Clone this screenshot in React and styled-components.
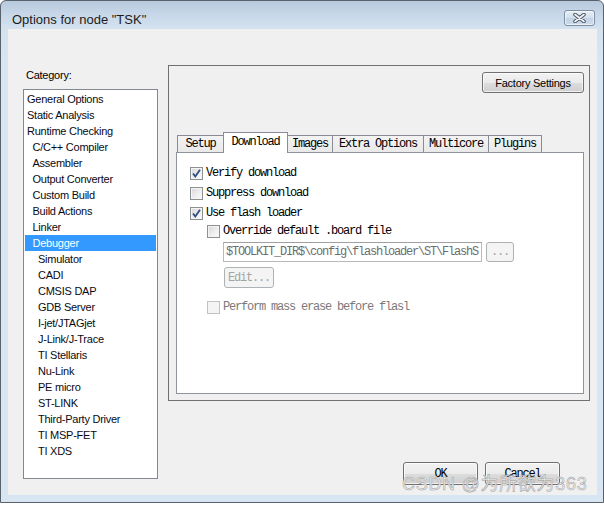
import React from 'react';
import styled, {createGlobalStyle, css} from 'styled-components';

const GlobalStyle = createGlobalStyle`
    html, body {
        margin: 0;
        padding: 0;
        background: #ffffff;
    }
    * {
        box-sizing: border-box;
    }
`

const uiFont = css`
    font-family: "Liberation Sans", Arial, sans-serif;
    font-size: 11px;
    letter-spacing: -0.25px;
`

const monoFont = css`
    font-family: "Liberation Mono", "Courier New", monospace;
    font-size: 12px;
    letter-spacing: -1.2px;
`

const Window = styled.div`
    position: relative;
    width: 604px;
    height: 503px;
    border: 1px solid #59616b;
    border-radius: 6px 6px 0 0;
    background: linear-gradient(180deg, #b7c9dd 0px, #c8d8e9 14px, #d4e2f0 28px, #d8e5f3 60px, #d8e5f3 100%);
    display: flex;
    flex-direction: column;
`

const TitleBar = styled.div`
    height: 28px;
    display: flex;
    justify-content: space-between;
    align-items: flex-start;
    padding: 0 8px 0 11px;
`

const Title = styled.div`
    font-family: "Liberation Sans", Arial, sans-serif;
    font-size: 13px;
    line-height: 16px;
    padding-top: 11px;
    color: #1c1c1c;
`

const CloseButton = styled.div`
    margin-top: 9px;
    width: 31px;
    height: 16px;
    border: 1px solid #7d8ea3;
    border-radius: 3px;
    background: linear-gradient(180deg, #e6eef7 0%, #d3dfec 50%, #c3d3e5 51%, #cddcec 100%);
    box-shadow: inset 0 0 0 1px rgba(255, 255, 255, 0.6);
    display: flex;
    align-items: center;
    justify-content: center;
`

const Client = styled.div`
    margin: 0 6px 0 7px;
    height: 466px;
    background: #f0f0f0;
    display: flex;
    gap: 10px;
    padding: 36px 7px 0 15px;
`

const LeftColumn = styled.div`
    width: 135px;
    display: flex;
    flex-direction: column;
`

const Label = styled.div`
    ${uiFont};
    line-height: 16px;
    margin: 2px 0 6px 3px;
    color: #000;
`

const ListBox = styled.div`
    height: 390px;
    border: 1px solid #828790;
    background: #ffffff;
    padding-top: 1px;
`

const ListItem = styled.div`
    ${uiFont};
    height: 16px;
    line-height: 16px;
    margin: 0 1px;
    white-space: nowrap;
    padding-left: ${props => 2 + props.$level * 5.5}px;
    color: #0a0a14;
    ${props => props.$selected && css`
        background: #3399ff;
        color: #ffffff;
    `}
`

const RightColumn = styled.div`
    width: 422px;
    display: flex;
    flex-direction: column;
`

const Panel = styled.div`
    height: 336px;
    border: 1px solid #717171;
    padding: 6px 5px 6px 7px;
    display: flex;
    flex-direction: column;
`

const PushButton = styled.div`
    ${props => props.$mono ? monoFont : uiFont};
    width: ${props => props.$w}px;
    height: ${props => props.$h}px;
    border: 1px solid #707070;
    border-radius: 3px;
    background: linear-gradient(180deg, #f2f2f2 0%, #ebebeb 50%, #dddddd 51%, #cfcfcf 100%);
    box-shadow: inset 0 0 0 1px rgba(255, 255, 255, 0.7);
    display: flex;
    align-items: center;
    justify-content: center;
    color: #000;
    flex: none;
`

const DisabledButton = styled.div`
    ${monoFont};
    width: ${props => props.$w}px;
    height: ${props => props.$h}px;
    border: 1px solid #adb2b5;
    border-radius: 3px;
    background: #f4f4f4;
    display: flex;
    align-items: center;
    justify-content: center;
    color: #a3a3a3;
    flex: none;
`

const TopRow = styled.div`
    display: flex;
    justify-content: flex-end;
`

const TabBlock = styled.div`
    margin-top: auto;
    display: flex;
    flex-direction: column;
`

const TabStrip = styled.div`
    height: 20px;
    display: flex;
    align-items: flex-end;
    padding-left: 1px;
`

const Tab = styled.div`
    ${monoFont};
    position: relative;
    width: ${props => props.$w}px;
    height: 17px;
    padding-top: 1px;
    line-height: 15px;
    text-align: center;
    white-space: nowrap;
    border: 1px solid #898c95;
    border-bottom: none;
    background: linear-gradient(180deg, #f3f3f3 0%, #e9e9e9 100%);
    color: #000;
    & + & {
        margin-left: -1px;
    }
    ${props => props.$active && css`
        height: 21px;
        margin-bottom: -1px;
        padding-top: 0;
        line-height: 19px;
        background: #ffffff;
        z-index: 1;
    `}
`

const TabPage = styled.div`
    height: 242px;
    border: 1px solid #8f949c;
    background: #ffffff;
    padding: 12px 0 0 13px;
    display: flex;
    flex-direction: column;
`

const CheckGroup = styled.div`
    display: flex;
    flex-direction: column;
    gap: 4px;
`

const CheckRow = styled.div`
    ${monoFont};
    height: 16px;
    display: flex;
    align-items: center;
    gap: 3px;
    white-space: nowrap;
    color: ${props => props.$disabled ? '#7a7a7a' : '#000'};
`

const Box = styled.div`
    width: 13px;
    height: 13px;
    flex: none;
    border: 1px solid #8e8f8f;
    background: linear-gradient(135deg, #d6d6d6 0%, #f0f0f0 60%, #fcfcfc 100%);
    box-shadow: inset 0 0 0 1px #f4f4f4;
    display: flex;
    align-items: center;
    justify-content: center;
    ${props => props.$disabled && css`
        border-color: #c2c2c2;
        background: #f4f4f4;
        box-shadow: none;
    `}
`

const SubBlock = styled.div`
    margin: 2px 0 0 17px;
    display: flex;
    flex-direction: column;
`

const PathRow = styled.div`
    margin: 3px 0 0 33px;
    display: flex;
    align-items: center;
    gap: 4px;
`

const PathField = styled.div`
    ${monoFont};
    width: 259px;
    height: 20px;
    line-height: 18px;
    border: 1px solid #b9b9b9;
    border-top-color: #a0a0a0;
    background: #ffffff;
    color: #6d6d6d;
    padding-left: 2px;
    overflow: hidden;
    white-space: nowrap;
`

const EditRow = styled.div`
    margin: 5px 0 0 34px;
`

const MassErase = styled.div`
    margin: 11px 0 0 17px;
`

const ButtonRow = styled.div`
    margin-top: 61px;
    display: flex;
    justify-content: flex-end;
    gap: 7px;
    padding-right: 30px;
`

const Watermark = styled.div`
    position: absolute;
    left: 401px;
    top: 472px;
    font-family: "Liberation Sans", Arial, "Noto Sans CJK SC", sans-serif;
    font-size: 18px;
    line-height: 22px;
    letter-spacing: 0.7px;
    color: #f1f1f1;
    -webkit-text-stroke: 0.5px #9a9a9a;
    white-space: nowrap;
`

const categories = [
    ['General Options', 0], ['Static Analysis', 0], ['Runtime Checking', 0],
    ['C/C++ Compiler', 1], ['Assembler', 1], ['Output Converter', 1], ['Custom Build', 1],
    ['Build Actions', 1], ['Linker', 1], ['Debugger', 1, true],
    ['Simulator', 2], ['CADI', 2], ['CMSIS DAP', 2], ['GDB Server', 2], ['I-jet/JTAGjet', 2],
    ['J-Link/J-Trace', 2], ['TI Stellaris', 2], ['Nu-Link', 2], ['PE micro', 2], ['ST-LINK', 2],
    ['Third-Party Driver', 2], ['TI MSP-FET', 2], ['TI XDS', 2],
]

const tabs = [
    ['Setup', 47], ['Download', 65, true], ['Images', 46],
    ['Extra Options', 92], ['Multicore', 66], ['Plugins', 54],
]

function CloseGlyph() {
    return (
        <svg width="13" height="10" viewBox="0 0 13 10">
            <path d="M2 1.5 L11 8.5 M11 1.5 L2 8.5" stroke="#4d5764" strokeWidth="3.6" strokeLinecap="round"/>
            <path d="M2 1.5 L11 8.5 M11 1.5 L2 8.5" stroke="#f4f6f9" strokeWidth="1.6" strokeLinecap="round"/>
        </svg>
    )
}

function Check({checked, disabled, label}) {
    return (
        <CheckRow $disabled={disabled}>
            <Box $disabled={disabled}>
                {checked && (
                    <svg width="11" height="11" viewBox="0 0 11 11">
                        <path d="M2 5.5 L4.3 8.4 L9 1.8" fill="none" stroke="#2f4b86" strokeWidth="1.8"/>
                    </svg>
                )}
            </Box>
            {label}
        </CheckRow>
    )
}

export default function App() {
    return (
        <Window>
            <GlobalStyle/>
            <TitleBar>
                <Title>Options for node "TSK"</Title>
                <CloseButton><CloseGlyph/></CloseButton>
            </TitleBar>
            <Client>
                <LeftColumn>
                    <Label>Category:</Label>
                    <ListBox>
                        {categories.map(([name, level, selected]) => (
                            <ListItem key={name} $level={level} $selected={selected}>{name}</ListItem>
                        ))}
                    </ListBox>
                </LeftColumn>
                <RightColumn>
                    <Panel>
                        <TopRow>
                            <PushButton $w={102} $h={21}>Factory Settings</PushButton>
                        </TopRow>
                        <TabBlock>
                            <TabStrip>
                                {tabs.map(([name, w, active]) => (
                                    <Tab key={name} $w={w} $active={active}>{name}</Tab>
                                ))}
                            </TabStrip>
                            <TabPage>
                                <CheckGroup>
                                    <Check checked label="Verify download"/>
                                    <Check label="Suppress download"/>
                                    <Check checked label="Use flash loader"/>
                                </CheckGroup>
                                <SubBlock>
                                    <Check label="Override default .board file"/>
                                </SubBlock>
                                <PathRow>
                                    <PathField>$TOOLKIT_DIR$\config\flashloader\ST\FlashS</PathField>
                                    <DisabledButton $w={28} $h={20}>...</DisabledButton>
                                </PathRow>
                                <EditRow>
                                    <DisabledButton $w={50} $h={21}>Edit...</DisabledButton>
                                </EditRow>
                                <MassErase>
                                    <Check disabled label="Perform mass erase before flasl"/>
                                </MassErase>
                            </TabPage>
                        </TabBlock>
                    </Panel>
                    <ButtonRow>
                        <PushButton $mono $w={75} $h={23}>OK</PushButton>
                        <PushButton $mono $w={75} $h={23}>Cancel</PushButton>
                    </ButtonRow>
                </RightColumn>
            </Client>
            <Watermark>CSDN @为所欲为363</Watermark>
        </Window>
    );
}
